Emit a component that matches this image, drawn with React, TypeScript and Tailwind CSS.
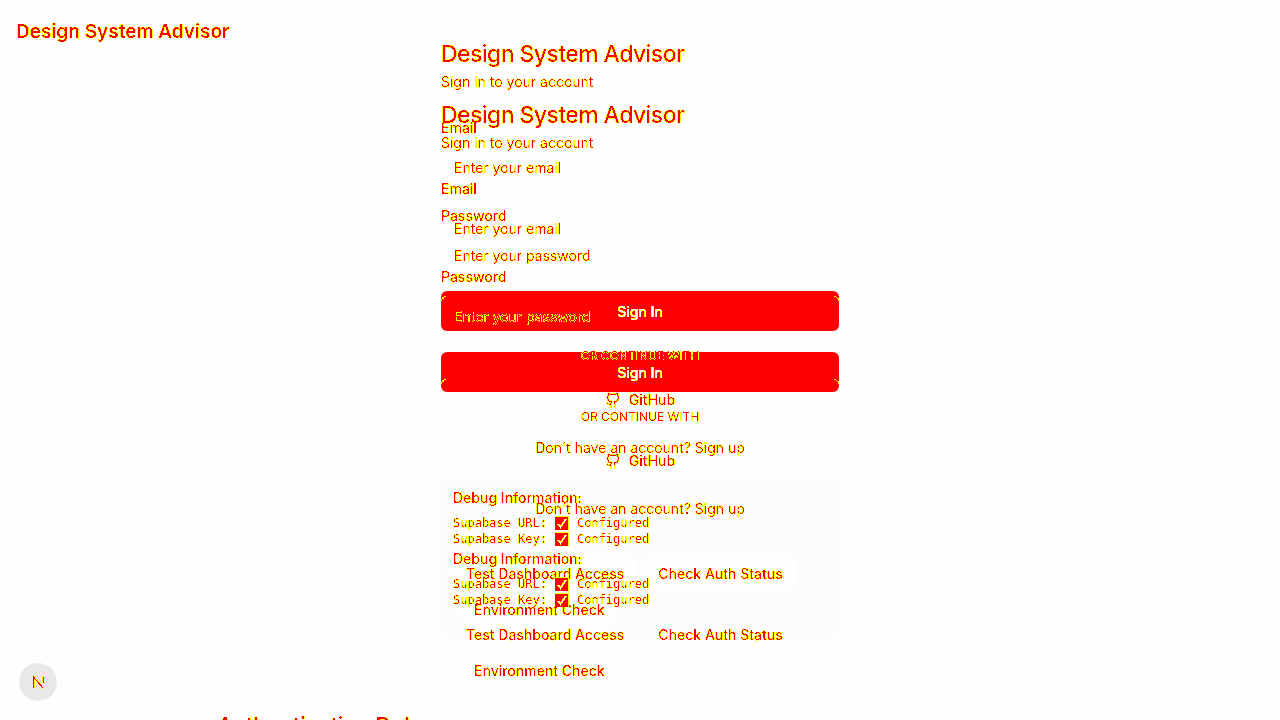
import { useId } from 'react';

const ink = 'relative z-10 text-black [filter:url(#ink)]';
const knockout = 'relative z-10 text-black [filter:url(#knockout)]';

function Filters() {
  return (
    <svg aria-hidden="true" className="absolute h-0 w-0">
      <defs>
        <filter id="ink" x="-5%" y="-30%" width="110%" height="160%" colorInterpolationFilters="sRGB">
          <feColorMatrix values="0 0 0 0 1  0 0 0 1 0  0 0 0 0 0  0 0 0 1 0" />
          <feComponentTransfer>
            <feFuncG type="discrete" tableValues="1 1 1 1 1 1 1 0 0 0" />
            <feFuncA type="discrete" tableValues="0 1 1 1 1 1 1 1 1 1 1 1 1 1 1 1 1 1 1 1" />
          </feComponentTransfer>
        </filter>
        <filter id="knockout" x="-5%" y="-30%" width="110%" height="160%" colorInterpolationFilters="sRGB">
          <feColorMatrix values="0 0 0 0 1  0 0 0 0 1  0 0 0 1 0  0 0 0 1 0" />
          <feComponentTransfer>
            <feFuncB type="discrete" tableValues="0 0 0 0 0 0 0 1 1 1" />
            <feFuncA type="discrete" tableValues="0 1 1 1 1 1 1 1 1 1" />
          </feComponentTransfer>
        </filter>
      </defs>
    </svg>
  );
}

function GitHubIcon() {
  return (
    <svg viewBox="0 0 24 24" className="h-4 w-4 fill-none stroke-current stroke-2" aria-hidden="true">
      <path
        strokeLinecap="round"
        strokeLinejoin="round"
        d="M15 22v-4a4.8 4.8 0 0 0-1-3.5c3 0 6-2 6-5.5.08-1.25-.27-2.48-1-3.5.28-1.15.28-2.35 0-3.5 0 0-1 0-3 1.5-2.64-.5-5.36-.5-8 0C6 2 5 2 5 2c-.3 1.15-.3 2.35 0 3.5A5.403 5.403 0 0 0 4 9c0 3.5 3 5.5 6 5.5-.39.49-.68 1.05-.85 1.65-.17.6-.22 1.23-.15 1.85v4"
      />
      <path d="M9 18c-4.51 2-5-2-7-2" />
    </svg>
  );
}

function CheckMark() {
  return (
    <svg viewBox="0 0 14 14" className="h-3.5 w-3.5" shapeRendering="crispEdges" aria-hidden="true">
      <rect width="14" height="14" rx="1" fill="#ff0" />
      <rect x="0" y="1" width="13" height="13" fill="#f00" />
      <path d="M3 8l2.500 3L11 3" fill="none" stroke="#ff0" strokeWidth="2" />
      <path d="M3 8l2.500 3L11 3" fill="none" stroke="#fff" strokeWidth="1" />
    </svg>
  );
}

function CornerMarks({ className }: { className: string }) {
  return (
    <div className={`absolute inset-x-0 z-10 flex justify-between ${className}`} aria-hidden="true">
      <svg viewBox="0 0 5 5" className="h-[5px] w-[5px]" shapeRendering="crispEdges" fill="#ff0">
        <path d="M3 0h2v1h-2zM1 1h2v1h-2zM1 2h1v1h-1zM0 3h1v2h-1zM2 2h1v1h-1z" />
      </svg>
      <svg viewBox="0 0 5 5" className="h-[5px] w-[5px]" shapeRendering="crispEdges" fill="#ff0">
        <path d="M0 0h2v1h-2zM2 1h1v1h-1zM3 2h2v1h-2zM4 3h1v2h-1z" />
      </svg>
    </div>
  );
}

function Field({ label, type, placeholder, faint }: { label: string; type: string; placeholder: string; faint: boolean }) {
  const id = useId();
  return (
    <div className="flex flex-col gap-1.5">
      <label htmlFor={id} className={`self-start text-sm leading-[26px] font-medium ${ink}`}>
        {label}
      </label>
      <div className={`h-10 rounded-md border ${faint ? 'border-[#fbfbfb]' : 'border-transparent'}`}>
        <input
          id={id}
          type={type}
          placeholder={placeholder}
          className={`h-full w-full bg-transparent px-3 text-sm outline-none placeholder:text-black ${ink}`}
        />
      </div>
    </div>
  );
}

function StatusRow({ name }: { name: string }) {
  return (
    <div className="flex h-4 items-center gap-2">
      <span className={ink}>{name}</span>
      <span className="relative z-10">
        <CheckMark />
      </span>
      <span className={ink}>Configured</span>
    </div>
  );
}

function SmallButton({ children, faint, className = '' }: { children: string; faint: boolean; className?: string }) {
  return (
    <button
      type="button"
      className={`h-9 rounded-md border px-3 pt-0.5 text-sm font-medium ${faint ? 'border-[#fcfcfc] bg-[#fefefe]' : 'border-transparent'} ${className}`}
    >
      <span className={`block ${ink}`}>{children}</span>
    </button>
  );
}

function SignInPage({ faint }: { faint: boolean }) {
  return (
    <main className="flex flex-col gap-6 p-4">
      <section className={`mx-auto w-full max-w-md rounded-lg border p-6 ${faint ? 'border-[#fbfbfb]' : 'border-transparent'}`}>
        <div className="flex flex-col items-start gap-1">
          <h1 className={`text-[23px] leading-[26px] font-medium tracking-tight ${ink}`}>Design System Advisor</h1>
          <p className={`text-sm leading-[22px] ${ink}`}>Sign in to your account</p>
        </div>
        <form className="mt-[22px] flex flex-col gap-4">
          <Field label="Email" type="email" placeholder="Enter your email" faint={faint} />
          <Field label="Password" type="password" placeholder="Enter your password" faint={faint} />
          <div className="relative">
            <button type="button" className="flex h-10 w-full items-center justify-center rounded-md bg-[#f00] pt-0.5 text-sm font-medium">
              <span className={knockout}>Sign In</span>
            </button>
            <CornerMarks className={faint ? 'top-[5px]' : 'bottom-2'} />
          </div>
          <div className="flex h-4 items-center justify-center pt-0.5">
            <span className={`text-xs uppercase ${ink}`}>Or continue with</span>
          </div>
          <button
            type="button"
            className={`flex h-10 items-center justify-center rounded-md border pt-0.5 text-sm font-medium ${faint ? 'border-[#fbfbfb]' : 'border-transparent'}`}
          >
            <span className={`flex items-center gap-2 ${ink}`}>
              <GitHubIcon />
              GitHub
            </span>
          </button>
        </form>
        <p className={`mt-4 text-center text-sm leading-[26px] ${ink}`}>
          Don&apos;t have an account? <a href="#signup">Sign up</a>
        </p>
        <div className={`mt-3.5 flex flex-col gap-1.5 rounded-md p-3 ${faint ? 'bg-[#fcfcfc]' : ''}`}>
          <h2 className={`self-start text-sm leading-[22px] font-medium ${ink}`}>Debug Information:</h2>
          <div className="font-['DejaVu_Sans_Mono',monospace] text-xs">
            <StatusRow name="Supabase URL:" />
            <StatusRow name="Supabase Key:" />
          </div>
          <div className="flex flex-wrap pt-0.5">
            <SmallButton faint={faint}>Test Dashboard Access</SmallButton>
            <SmallButton faint={faint} className="ml-2">Check Auth Status</SmallButton>
            <SmallButton faint={faint} className="ml-2">Environment Check</SmallButton>
          </div>
        </div>
      </section>
      <div className="mx-auto w-full max-w-4xl">
        <section className={`max-w-2xl rounded-lg border p-6 ${faint ? 'border-[#fbfbfb]' : 'border-transparent'}`}>
          <h2 className={`w-fit text-[23px] leading-[26px] font-medium tracking-tight ${ink}`}>Authentication Debug</h2>
        </section>
      </div>
    </main>
  );
}

export default function App() {
  return (
    <div className="relative grid h-screen overflow-hidden bg-[#fefefe] font-['Inter',sans-serif] text-black">
      <Filters />
      <div className="[grid-area:1/1]">
        <SignInPage faint />
      </div>
      <div className="[grid-area:1/1]">
        <header className="flex h-[61px] items-center px-4 pt-1">
          <span className={`text-[19px] font-semibold ${ink}`}>Design System Advisor</span>
        </header>
        <SignInPage faint={false} />
      </div>
      <button
        type="button"
        aria-label="Open dev tools"
        className="absolute bottom-5 left-5 z-20 flex h-9 w-9 items-center justify-center rounded-full bg-[#e8e8e8] ring-1 ring-[#ebebeb]"
      >
        <svg viewBox="0 0 13 15" className="h-[15px] w-[13px]" shapeRendering="crispEdges" fill="none">
          <path d="M1.500 13V1.500L11.500 13.500M10.500 1v7" stroke="#ff0" strokeWidth="2" />
          <path d="M1.500 13V2L11.500 13.500M11.500 2v6" stroke="#f00" strokeWidth="1" />
        </svg>
      </button>
    </div>
  );
}
